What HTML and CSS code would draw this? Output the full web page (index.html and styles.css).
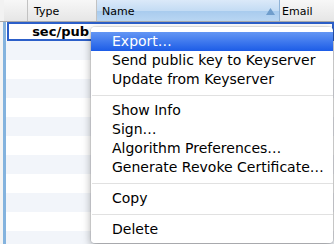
FILE: index.html
```html
<!DOCTYPE html>
<html>
<head>
<meta charset="utf-8">
<link rel="stylesheet" href="styles.css">
</head>
<body>
<div class="window">
  <div class="header">
    <div class="hcell hc-check"></div>
    <div class="hcell hc-type">Type</div>
    <div class="hcell hc-name sorted"><span>Name</span><svg class="sort" width="9" height="7" viewBox="0 0 9 7"><path d="M4.5 0 L9 7 L0 7 Z" fill="#6f9dcc"/></svg></div>
    <div class="hcell hc-email">Email</div>
  </div>
  <div class="body">
    <div class="rows">
      <div class="row selected"><div class="c-check"></div><div class="c-type">sec/pub</div></div>
      <div class="row alt"></div>
      <div class="row"></div>
      <div class="row alt"></div>
      <div class="row"></div>
      <div class="row alt"></div>
      <div class="row"></div>
      <div class="row alt"></div>
      <div class="row"></div>
      <div class="row alt"></div>
      <div class="row"></div>
      <div class="row alt"></div>
    </div>
  </div>
  <div class="menu">
    <div class="item active">Export…</div>
    <div class="item">Send public key to Keyserver</div>
    <div class="item">Update from Keyserver</div>
    <div class="sep"></div>
    <div class="item">Show Info</div>
    <div class="item">Sign…</div>
    <div class="item">Algorithm Preferences…</div>
    <div class="item">Generate Revoke Certificate…</div>
    <div class="sep"></div>
    <div class="item">Copy</div>
    <div class="sep"></div>
    <div class="item">Delete</div>
  </div>
</div>
</body>
</html>
```
FILE: styles.css
```css
html, body {
  margin: 0;
  padding: 0;
  width: 334px;
  height: 244px;
  overflow: hidden;
  background: #ffffff;
  font-family: "DejaVu Sans", "Liberation Sans", sans-serif;
}
.window {
  position: relative;
  width: 334px;
  height: 244px;
  overflow: hidden;
}
.header {
  display: grid;
  grid-template-columns: 28px 69px 183px 1fr;
  height: 21px;
  border-bottom: 1px solid #a9a9a9;
  background: linear-gradient(#f7f7f7, #e6e6e6);
  font-size: 11px;
  color: #000;
}
.hcell {
  display: flex;
  align-items: center;
  padding-top: 1px;
  box-sizing: border-box;
  border-right: 1px solid #c2c2c2;
}
.hc-check {
  border-left: 4px solid #f2f2f2;
}
.hc-type { padding-left: 6px; }
.hc-name {
  padding-left: 5px;
  padding-right: 4px;
  justify-content: space-between;
  background: linear-gradient(#dbe9f9 0%, #c4dcf4 50%, #a8cbee 51%, #b9d6f3 100%);
  border-right: 1px solid #8fb2d6;
}
.hc-email { padding-left: 2px; border-right: none; }
.sort { margin-top: 1px; }
.body {
  display: flex;
  border-left: 3px solid #f4f4f4;
}
.rows {
  flex: 1;
  border-left: 3px solid #84b3de;
}
.row {
  height: 19px;
  display: flex;
  background: #ffffff;
}
.row.alt { background: #f2f5fa; }
.row.selected {
  box-shadow: inset 0 0 0 2px #2c5fc9;
  margin-left: 1px;
}
.c-check { width: 21px; }
.c-type {
  width: 69px;
  text-align: right;
  padding-right: 8px;
  box-sizing: border-box;
  font-weight: bold;
  font-size: 13px;
  line-height: 19px;
  color: #000;
}
.menu {
  position: absolute;
  left: 91px;
  top: 27px;
  width: 242px;
  box-sizing: border-box;
  padding: 5px 0 4px 0;
  background: rgba(255,255,255,0.98);
  border-radius: 4px;
  box-shadow: 0 3px 9px rgba(0,0,0,0.35), 0 0 0 1px rgba(0,0,0,0.08);
  font-size: 14px;
  color: #000;
}
.item {
  height: 19px;
  line-height: 19px;
  padding-left: 21px;
  white-space: nowrap;
}
.item.active {
  color: #fff;
  background: linear-gradient(#6396f4, #1c5ce7);
}
.sep {
  height: 1px;
  background: #e1e1e1;
  margin: 6px 0 5px 1px;
}
```
